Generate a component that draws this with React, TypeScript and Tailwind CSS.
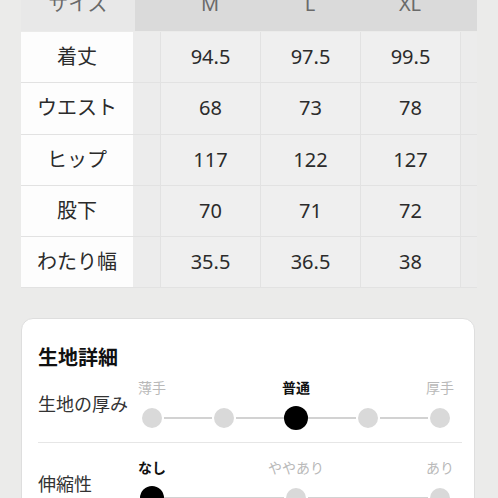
import React from 'react';

const sizes = ['M', 'L', 'XL'];

const rows = [
  { label: '着丈', values: ['94.5', '97.5', '99.5'] },
  { label: 'ウエスト', values: ['68', '73', '78'] },
  { label: 'ヒップ', values: ['117', '122', '127'] },
  { label: '股下', values: ['70', '71', '72'] },
  { label: 'わたり幅', values: ['35.5', '36.5', '38'] },
];

interface ScaleProps {
  label: string;
  points: (string | null)[];
  active: number;
}

// 5段階 / 3段階のスケール
function Scale({ label, points, active }: ScaleProps) {
  return (
    <div className="flex items-center">
      <div className="w-[102px] shrink-0 text-[18px] leading-[26px] text-[#333]">{label}</div>
      <div className="w-[312px] flex flex-col gap-[8px]">
        {/* ラベル */}
        <div className="flex h-[20px]">
          {points.map((p, i) => (
            <React.Fragment key={i}>
              {i > 0 && <div className="flex-1" />}
              <div className="w-6 flex flex-col items-center">
                {p && (
                  <span
                    className={`whitespace-nowrap text-[14px] leading-[20px] ${
                      i === active ? 'font-bold text-[#111]' : 'text-[#b9b9b9]'
                    }`}
                  >
                    {p}
                  </span>
                )}
              </div>
            </React.Fragment>
          ))}
        </div>
        {/* ドット */}
        <div className="flex items-center h-6">
          {points.map((_, i) => (
            <React.Fragment key={i}>
              {i > 0 && <div className="flex-1 h-[2px] bg-[#d2d2d2]" />}
              <div className="w-6 flex items-center justify-center">
                <div
                  className={
                    i === active
                      ? 'w-6 h-6 rounded-full bg-black'
                      : 'w-5 h-5 rounded-full bg-[#d9d9d9]'
                  }
                />
              </div>
            </React.Fragment>
          ))}
        </div>
      </div>
    </div>
  );
}

export default function App() {
  return (
    <div
      className="h-[498px] overflow-hidden bg-[#ebebea] px-[21px]"
      style={{ fontFamily: '"Noto Sans", "Noto Sans CJK JP", sans-serif' }}
    >
      {/* サイズ表 */}
      <div className="w-[456px]">
        <div className="flex h-[54px] -mt-[23px] items-center text-[20px] text-[#6a6a6a]">
          <div className="w-[114px] h-full flex items-center justify-center bg-[#e8e8e8]">サイズ</div>
          <div className="flex-1 h-full flex items-center bg-[#dadada]">
            <div className="w-[25px]" />
            {sizes.map((s) => (
              <div key={s} className="w-[100px] text-center">
                {s}
              </div>
            ))}
          </div>
        </div>
        <div className="h-px" />
        {rows.map((r) => (
          <div key={r.label} className="flex h-[51.3px] border-b border-[#e2e2e2] text-[20px] text-[#2b2b2b]">
            <div className="w-[112px] flex items-center justify-center bg-[#fdfdfd]">{r.label}</div>
            <div className="w-[27px] bg-[#ececec]" />
            {r.values.map((v, i) => (
              <div
                key={i}
                className="w-[100px] flex items-center justify-center border-l border-[#e2e2e2] bg-[#efefef]"
              >
                {v}
              </div>
            ))}
            <div className="flex-1 border-l border-[#e2e2e2] bg-[#ececec]" />
          </div>
        ))}
      </div>

      {/* 生地詳細 */}
      <div className="mt-[30px] w-[454px] bg-white rounded-[12px] border border-[#dedede] pl-[16px] pr-[12px] pt-[26px]">
        <h3 className="text-[20px] leading-[26px] font-bold text-[#111]">生地詳細</h3>
        <div className="mt-[7px]">
          <Scale label="生地の厚み" points={['薄手', null, '普通', null, '厚手']} active={2} />
        </div>
        <div className="mt-[12px] h-px bg-[#e6e6e6]" />
        <div className="mt-[15px]">
          <Scale label="伸縮性" points={['なし', 'ややあり', 'あり']} active={0} />
        </div>
      </div>
    </div>
  );
}
